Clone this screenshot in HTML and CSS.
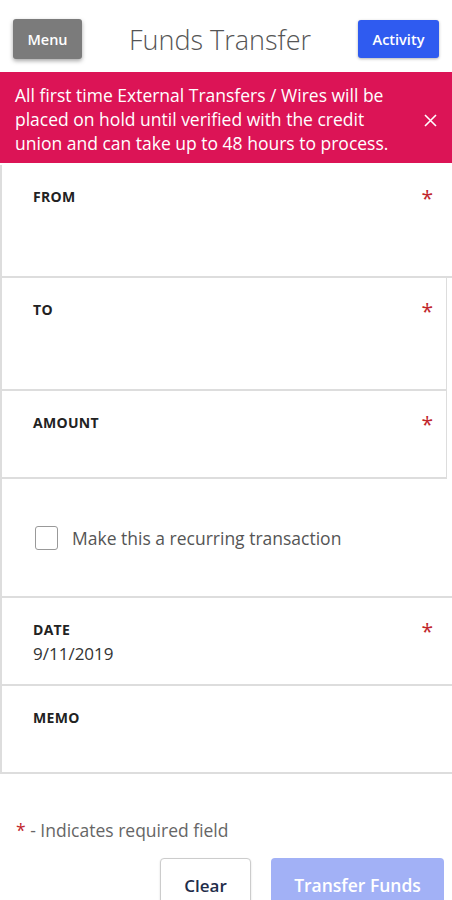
FILE: index.html
```html
<!doctype html>
<html lang="en">
    <head>
        <meta charset="utf-8">
        <title>Funds Transfer</title>
        <link rel="stylesheet" href="styles.css">
    </head>
    <body>
        <div class="header">
            <button class="btn-menu">Menu</button>
            <h1 class="title">Funds Transfer</h1>
            <button class="btn-activity">Activity</button>
        </div>

        <div class="alert">
            <p>All first time External Transfers / Wires will be placed on hold until verified with the credit union and can take up to 48 hours to process.</p>
            <svg class="alert-close" width="13" height="13" viewBox="0 0 13 13">
                <path d="M1 1 L12 12 M12 1 L1 12" stroke="#fff" stroke-width="1.6" fill="none"/>
            </svg>
        </div>

        <div class="fields">
            <div class="field tall">
                <span class="field-label">FROM</span>
                <span class="req">*</span>
            </div>
            <div class="field tall edge">
                <span class="field-label">TO</span>
                <span class="req">*</span>
            </div>
            <div class="field edge">
                <span class="field-label">AMOUNT</span>
                <span class="req">*</span>
            </div>
            <div class="field recurring">
                <label class="check">
                    <span class="box"></span>
                    Make this a recurring transaction
                </label>
            </div>
            <div class="field">
                <span class="field-label">DATE</span>
                <span class="req">*</span>
                <div class="field-value">9/11/2019</div>
            </div>
            <div class="field">
                <span class="field-label">MEMO</span>
            </div>
        </div>

        <p class="note"><span class="req-inline">*</span> - Indicates required field</p>

        <div class="actions">
            <button class="btn-clear">Clear</button>
            <button class="btn-submit">Transfer Funds</button>
        </div>
    </body>
</html>
```

FILE: styles.css
```css
html, body{
    margin: 0px;
    padding: 0px;
    background-color: #fff;
}
body{
    font-family: "Open Sans", "Liberation Sans", sans-serif;
    color: #333;
    min-height: 960px;
}
button{
    font-family: inherit;
    cursor: pointer;
    -webkit-appearance: none;
}
.header{
    height: 72px;
    display: flex;
    align-items: center;
    justify-content: space-between;
    padding: 0px 13px;
    box-sizing: border-box;
}
.btn-menu{
    width: 69px;
    height: 40px;
    background: #7b7b7b;
    color: #fff;
    border: none;
    border-radius: 3px;
    font-size: 14.5px;
    font-weight: 600;
    box-shadow: 0 2px 4px rgba(0,0,0,0.35);
    margin-top: 6px;
}
.title{
    margin: 6px 0 0 0;
    font-size: 27px;
    font-weight: 300;
    color: #555;
}
.btn-activity{
    width: 81px;
    height: 38px;
    background: #2f5bf0;
    color: #fff;
    border: none;
    border-radius: 3px;
    font-size: 14.5px;
    font-weight: 600;
    box-shadow: 0 1px 3px rgba(0,0,0,0.3);
    margin-top: 6px;
}
.alert{
    background-color: #dc1456;
    color: #fff;
    display: flex;
    align-items: center;
    padding: 11px 15px 8px 15px;
}
.alert p{
    margin: 0;
    font-size: 17.5px;
    line-height: 24px;
    flex: 1;
}
.alert-close{
    flex: none;
    margin-left: 20px;
    margin-top: 2px;
}
.fields{
    margin-top: 2px;
    border-left: 2px solid #ddd;
}
.field{
    position: relative;
    min-height: 88px;
    padding: 23px 30px 0 31px;
    box-sizing: border-box;
    border-bottom: 2px solid #ddd;
}
.field.tall{
    min-height: 113px;
}
.field.edge{
    margin-right: 5px;
    border-right: 1px solid #ddd;
}
.field-label{
    display: block;
    font-size: 14px;
    line-height: 18px;
    font-weight: 700;
    color: #222;
    letter-spacing: 0.3px;
}
.req{
    position: absolute;
    right: 19px;
    top: 23px;
    color: #c1272d;
    font-size: 21px;
    line-height: 20px;
}
.field.edge .req{
    right: 13px;
}
.field-value{
    margin-top: 3px;
    font-size: 17px;
    color: #333;
}
.recurring{
    min-height: 119px;
    display: flex;
    align-items: center;
    padding-top: 0;
}
.check{
    display: flex;
    align-items: center;
    font-size: 17.5px;
    color: #555;
    margin-left: 2px;
}
.box{
    width: 21px;
    height: 22px;
    border: 1px solid #999;
    border-radius: 3px;
    margin-right: 14px;
}
.note{
    margin: 44px 0 0 16px;
    font-size: 17.5px;
    color: #666;
}
.req-inline{
    color: #c1272d;
}
.actions{
    display: flex;
    justify-content: flex-end;
    gap: 20px;
    padding-right: 8px;
    margin-top: 16px;
}
.btn-clear{
    width: 91px;
    height: 54px;
    background: #fff;
    border: 1px solid #ccc;
    border-radius: 4px;
    font-size: 17px;
    font-weight: 600;
    color: #1f2d4a;
    box-shadow: 0 1px 2px rgba(0,0,0,0.15);
}
.btn-submit{
    width: 173px;
    height: 54px;
    background: #a2b1f6;
    border: none;
    border-radius: 4px;
    font-size: 17.5px;
    font-weight: 600;
    color: #fff;
}
```
